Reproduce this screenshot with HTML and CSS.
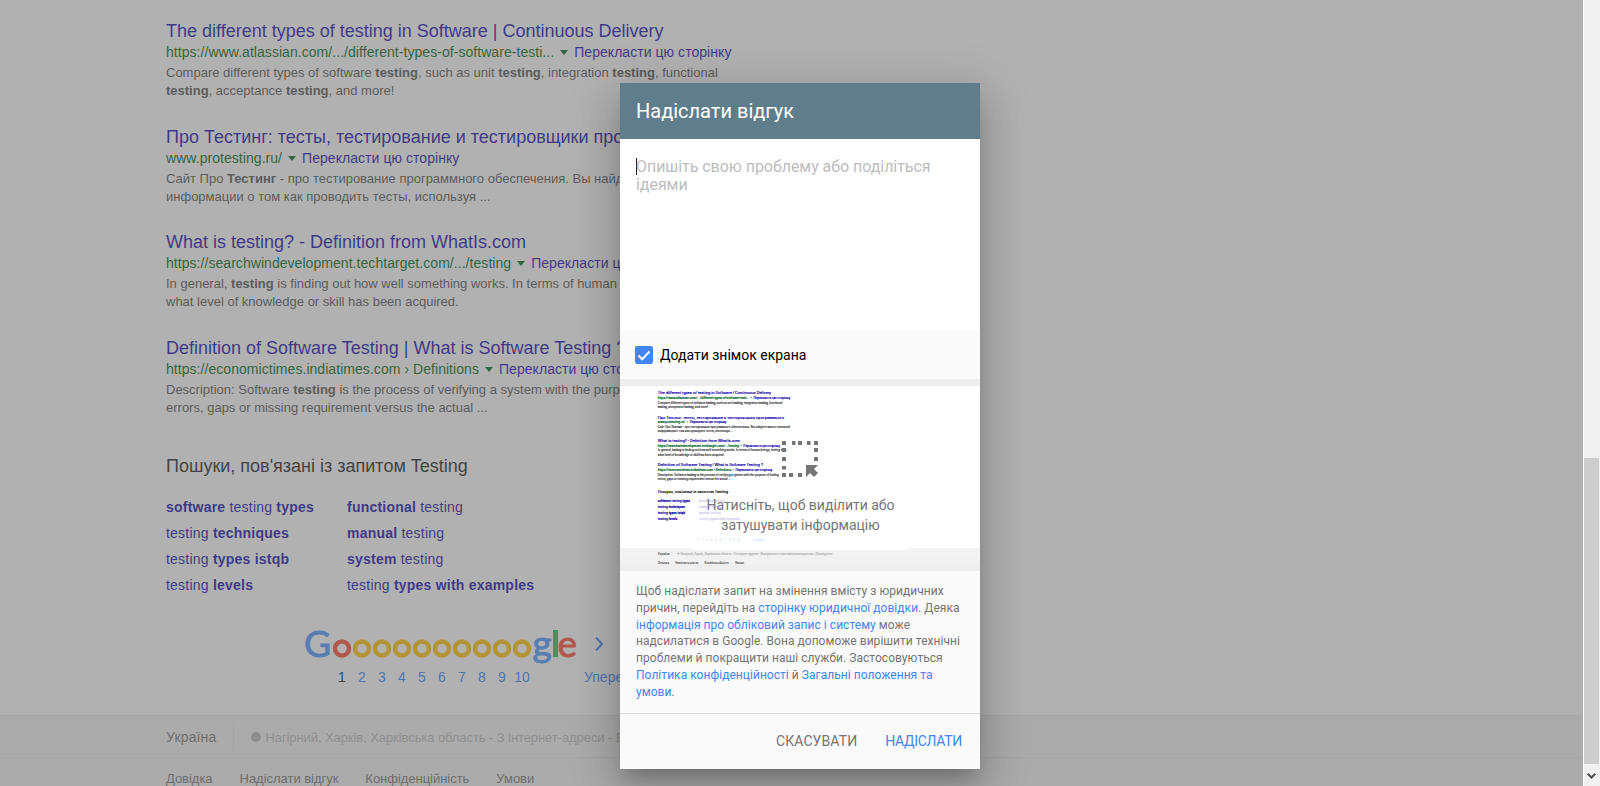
FILE: index.html
```html
<!DOCTYPE html>
<html lang="uk">
<head>
<meta charset="utf-8">
<title>Testing - Пошук Google</title>
<link rel="stylesheet" href="styles.css">
</head>
<body>
<main class="viewport">
  <div class="page" id="page">
    <div class="results">
      <div class="result">
        <a class="r-title">The different types of testing in Software | Continuous Delivery</a>
        <div class="r-url"><cite>https://www.atlassian.com/.../different-types-of-software-testi...</cite><i class="drop"></i><a class="r-tr">Перекласти цю сторінку</a></div>
        <p class="r-snip">Compare different types of software <b>testing</b>, such as unit <b>testing</b>, integration <b>testing</b>, functional<br><b>testing</b>, acceptance <b>testing</b>, and more!</p>
      </div>
      <div class="result">
        <a class="r-title">Про Тестинг: тесты, тестирование и тестировщики программного</a>
        <div class="r-url"><cite>www.protesting.ru/</cite><i class="drop"></i><a class="r-tr">Перекласти цю сторінку</a></div>
        <p class="r-snip">Сайт Про <b>Тестинг</b> - про тестирование программного обеспечения. Вы найдете много полезной<br>информации о том как проводить тесты, используя ...</p>
      </div>
      <div class="result">
        <a class="r-title">What is testing? - Definition from WhatIs.com</a>
        <div class="r-url"><cite>https://searchwindevelopment.techtarget.com/.../testing</cite><i class="drop"></i><a class="r-tr">Перекласти цю сторінку</a></div>
        <p class="r-snip">In general, <b>testing</b> is finding out how well something works. In terms of human beings, testing tells<br>what level of knowledge or skill has been acquired.</p>
      </div>
      <div class="result">
        <a class="r-title">Definition of Software Testing | What is Software Testing ?</a>
        <div class="r-url"><cite>https://economictimes.indiatimes.com › Definitions</cite><i class="drop"></i><a class="r-tr">Перекласти цю сторінку</a></div>
        <p class="r-snip">Description: Software <b>testing</b> is the process of verifying a system with the purpose of finding<br>errors, gaps or missing requirement versus the actual ...</p>
      </div>
    </div>

    <h2 class="rel-head">Пошуки, пов'язані із запитом Testing</h2>
    <div class="rel-grid">
      <a><b>software</b> testing <b>types</b></a><a><b>functional</b> testing</a>
      <a>testing <b>techniques</b></a><a><b>manual</b> testing</a>
      <a>testing <b>types istqb</b></a><a><b>system</b> testing</a>
      <a>testing <b>levels</b></a><a>testing <b>types with examples</b></a>
    </div>

    <nav class="pager">
      <svg class="logo" width="305" height="41" viewBox="0 0 305 41" role="img" aria-label="Google">
        <text class="lg-text lg-blue" x="0" y="31">G</text>
        <g class="lg-ring lg-red-s"><circle cx="38" cy="22.500" r="7"/></g>
        <g class="lg-ring lg-yel-s">
          <circle cx="58" cy="22.500" r="7"/><circle cx="78" cy="22.500" r="7"/><circle cx="98" cy="22.500" r="7"/>
          <circle cx="118" cy="22.500" r="7"/><circle cx="138" cy="22.500" r="7"/><circle cx="158" cy="22.500" r="7"/>
          <circle cx="178" cy="22.500" r="7"/><circle cx="198" cy="22.500" r="7"/><circle cx="218" cy="22.500" r="7"/>
        </g>
        <text class="lg-text lg-blue" x="228.500" y="31">g</text>
        <rect class="lg-green" x="249" y="4" width="5" height="27"/>
        <text class="lg-text lg-red" x="253.500" y="31">e</text>
      </svg>
      <svg class="chev" width="10" height="16" viewBox="0 0 10 16"><path d="M2 1.500l6 6.500-6 6.500"/></svg>
      <div class="nums">
        <span class="cur">1</span><a>2</a><a>3</a><a>4</a><a>5</a><a>6</a><a>7</a><a>8</a><a>9</a><a>10</a>
        <a class="next">Уперед</a>
      </div>
    </nav>

    <footer class="foot">
      <div class="foot-loc">
        <span class="foot-country">Україна</span>
        <span class="foot-dot"></span>
        <span class="foot-place">Нагірний, Харків, Харківська область - З інтернет-адреси - Використати точне місцезнаходження - Докладніше</span>
      </div>
      <div class="foot-links"><a>Довідка</a><a>Надіслати відгук</a><a>Конфіденційність</a><a>Умови</a></div>
    </footer>
  </div>

  <div class="overlay"></div>
</main>

<aside class="scrollbar">
  <div class="sb-thumb"></div>
  <svg class="sb-arrow" width="9" height="7" viewBox="0 0 9 7"><path d="M0 1.500L1.500 0l3 3 3-3L9 1.500 4.500 6z" fill="#505050"/></svg>
</aside>

<section class="dialog">
  <header class="dlg-head">Надіслати відгук</header>
  <div class="dlg-input"><i class="caret"></i>Опишіть свою проблему або поділіться ідеями</div>
  <label class="dlg-check">
    <svg width="18" height="18" viewBox="0 0 18 18"><rect width="18" height="18" rx="2" fill="#4285f4"/><path d="M3.500 9.500l3.700 3.700 7.300-7.700" fill="none" stroke="#fff" stroke-width="2"/></svg>
    <span>Додати знімок екрана</span>
  </label>
  <div class="dlg-shot">
    <div class="shot-frame">
      <div class="shot-page" id="shot"></div>
      <svg class="shot-icon" width="36" height="36" viewBox="0 0 36 36"><path fill="#757575" d="M0 0h4v4H0zM10 0h3.500v4H10zM16 0h4v4h-4zM25 0h3.500v4H25zM32 0h4v4h-4zM0 7h4v4H0zM0 16h4v4H0zM0 25h4v3.500H0zM0 32h4v4H0zM32 7h4v4h-4zM32 16h4v4h-4zM7 32h4v4H7zM16 32h4v4h-4zM24 24h12l-4 4 4 4-4 4-4-4-4 4z"/></svg>
      <div class="shot-note">Натисніть, щоб виділити або затушувати інформацію</div>
    </div>
  </div>
  <p class="dlg-legal">Щоб надіслати запит на змінення вмісту з юридичних причин, перейдіть на <a>сторінку юридичної довідки</a>. Деяка <a>інформація про обліковий запис і систему</a> може надсилатися в Google. Вона допоможе вирішити технічні проблеми й покращити наші служби. Застосовуються <a>Політика конфіденційності</a> й <a>Загальні положення та умови</a>.</p>
  <div class="dlg-actions"><button class="btn">Скасувати</button><button class="btn btn-send">Надіслати</button></div>
</section>
<script src="thumb.js"></script>
</body>
</html>
```
FILE: styles.css
```css
* { box-sizing: border-box; }
html, body { height: 100%; }
body { margin: 0; display: flex; height: 786px; overflow: hidden; background: #fff; font-family: "Liberation Sans", Arial, sans-serif; }
a { color: inherit; text-decoration: none; }
p, h2 { margin: 0; }

.viewport { position: relative; width: 1583px; height: 786px; overflow: hidden; flex: none; }
.page { width: 1583px; height: 786px; background: #fff; display: flex; flex-direction: column; overflow: hidden; }
.overlay { position: absolute; inset: 0; background: rgba(99, 99, 99, .5); }

.results { padding: 20px 0 0 166px; }
.result { height: 105.5px; white-space: nowrap; }
.r-title { display: block; font-size: 18px; line-height: 22px; color: #1a0dab; }
.r-url { display: flex; align-items: center; height: 20px; font-size: 14px; letter-spacing: .05px; color: #006621; }
.r-url cite { font-style: normal; }
.drop { width: 0; height: 0; margin: 1px 6px 0 6px; border-top: 5px solid #006621; border-left: 4px solid transparent; border-right: 4px solid transparent; }
.r-tr { color: #1a0dab; }
.r-snip { padding-top: 2px; font-size: 13px; line-height: 18px; color: #545454; }

.rel-head { margin: 13px 0 0 166px; font-size: 18px; font-weight: 400; line-height: 22px; color: #222; }
.rel-grid { margin: 17px 0 0 166px; display: grid; grid-template-columns: 181px auto; justify-content: start; grid-auto-rows: 26px; font-size: 14px; line-height: 26px; letter-spacing: .22px; color: #1a0dab; }

.pager { position: relative; margin: 28px 0 0 304px; }
.logo { display: block; overflow: visible; }
.lg-text { font-family: Lato, sans-serif; font-weight: 400; font-size: 37px; stroke-width: .9; }
.lg-ring { fill: none; stroke-width: 4.400; }
.lg-blue { fill: #4c97ff; stroke: #4c97ff; }
.lg-red { fill: #ff4b35; stroke: #ff4b35; }
.lg-red-s { stroke: #ff4b35; }
.lg-yel-s { stroke: #ffc405; }
.lg-green { fill: #1fc85b; }
.chev { position: absolute; left: 290px; top: 10px; }
.chev path { fill: none; stroke: #4285f4; stroke-width: 2; }
.nums { display: flex; margin-left: 28px; font-size: 14px; line-height: 20px; color: #4285f4; }
.nums > * { width: 20px; text-align: center; flex: none; }
.nums .cur { color: #222; }
.nums .next { width: auto; margin-left: 52px; }

.foot { margin-top: auto; height: 71px; background: #f2f2f2; border-top: 1px solid #e4e4e4; font-size: 13px; color: #777; }
.foot-loc { display: flex; align-items: center; height: 42px; padding: 1px 0 0 166px; border-bottom: 1px solid #e4e4e4; }
.foot-country { padding-right: 17px; margin-right: 17px; font-size: 14px; letter-spacing: .15px; line-height: 25px; border-right: 1px solid #e4e4e4; }
.foot-dot { width: 10px; height: 10px; margin-right: 4px; border-radius: 50%; background: #b5b5b5; }
.foot-place { color: #bbb; white-space: nowrap; letter-spacing: -.08px; }
.foot-links { display: flex; gap: 27px; padding: 12px 0 0 166px; line-height: 18px; letter-spacing: -.03px; }

.scrollbar { position: relative; flex: none; width: 17px; height: 786px; background: #f1f1f1; border-left: 1px solid #fff; }
.sb-thumb { width: 15px; height: 306px; margin-top: 458px; background: #cdcdcd; }
.sb-arrow { display: block; margin: 9px 0 0 3px; }

.dialog { position: absolute; left: 620px; top: 83px; width: 360px; height: 686px; display: flex; flex-direction: column; background: #fafafa; box-shadow: 0 24px 38px 3px rgba(0,0,0,.14), 0 9px 46px 8px rgba(0,0,0,.12), 0 11px 15px -7px rgba(0,0,0,.2); font-family: Roboto, sans-serif; }
.dlg-head { height: 56px; padding: 0 16px; background: #607d8b; color: #fff; font-size: 20px; line-height: 56px; }
.dlg-input { height: 192px; padding: 19px 16px 0; background: #fff; color: #bdbdbd; font-size: 16px; line-height: 18px; letter-spacing: -.05px; }
.caret { display: inline-block; width: 1px; height: 17px; margin-right: -1px; vertical-align: -3px; background: #222; }
.dlg-check { display: flex; align-items: center; gap: 7px; height: 48px; padding: 0 15px; color: #000; font-size: 14px; }
.dlg-shot { height: 192px; padding: 7px 0; background: #eee; }
.shot-frame { position: relative; height: 178px; overflow: hidden; background: #fff; }
.shot-page { position: absolute; left: 0; top: 0; width: 1583px; height: 786px; transform: scale(.2274); transform-origin: 0 0; pointer-events: none; -webkit-text-stroke: .8px; }
.shot-page .logo, .shot-page .chev { visibility: hidden; }
.shot-icon { position: absolute; left: 162px; top: 55px; }
.shot-note { position: absolute; left: 70px; top: 109px; width: 221px; height: 55px; padding: 0 12px; border-radius: 4px; background: rgba(255,255,255,.8); color: #757575; font-size: 14px; line-height: 20px; text-align: center; }
.dlg-legal { height: 143px; padding: 12px 16px 0; color: #757575; font-size: 12px; line-height: 16.800px; letter-spacing: .04px; border-bottom: 1px solid #e0e0e0; }
.dlg-legal a { color: #4285f4; }
.dlg-actions { display: flex; justify-content: flex-end; gap: 28px; padding: 17px 18px 0 0; }
.btn { padding: 0; border: 0; background: none; font: 14px/20px Roboto, sans-serif; text-transform: uppercase; letter-spacing: .1px; color: #757575; }
.btn-send { color: #4285f4; letter-spacing: -.3px; }
```
FILE: thumb.js
```js
document.getElementById('shot').appendChild(document.getElementById('page').cloneNode(true));
```
